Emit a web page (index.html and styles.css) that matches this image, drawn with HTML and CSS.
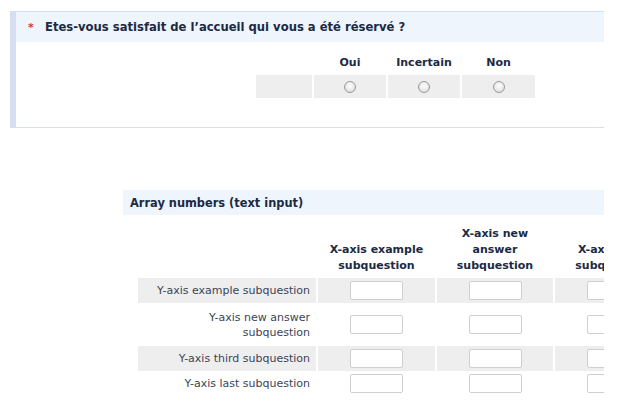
FILE: index.html
```html
<!DOCTYPE html>
<html lang="fr">
<head>
<meta charset="utf-8">
<link rel="stylesheet" href="styles.css">
</head>
<body>
<div class="page">
  <section class="q1">
    <div class="q1-head"><span class="req">*</span><span class="q1-title">Etes-vous satisfait de l’accueil qui vous a été réservé ?</span></div>
    <div class="q1-grid">
      <div class="hcell"></div>
      <div class="hcell">Oui</div>
      <div class="hcell">Incertain</div>
      <div class="hcell">Non</div>
      <div class="rcell"></div>
      <div class="rcell"><span class="radio"></span></div>
      <div class="rcell"><span class="radio"></span></div>
      <div class="rcell"><span class="radio"></span></div>
    </div>
  </section>

  <section class="q2">
    <div class="q2-head">Array numbers (text input)</div>
    <div class="q2-grid">
      <div class="colhead"></div>
      <div class="colhead">X-axis example<br>subquestion</div>
      <div class="colhead">X-axis new<br>answer<br>subquestion</div>
      <div class="colhead">X-axis third<br>subquestion</div>

      <div class="lbl shade">Y-axis example subquestion</div>
      <div class="cell shade"><span class="inp"></span></div>
      <div class="cell shade"><span class="inp"></span></div>
      <div class="cell shade"><span class="inp"></span></div>

      <div class="lbl tall">Y-axis new answer<br>subquestion</div>
      <div class="cell"><span class="inp"></span></div>
      <div class="cell"><span class="inp"></span></div>
      <div class="cell"><span class="inp"></span></div>

      <div class="lbl shade">Y-axis third subquestion</div>
      <div class="cell shade"><span class="inp"></span></div>
      <div class="cell shade"><span class="inp"></span></div>
      <div class="cell shade"><span class="inp"></span></div>

      <div class="lbl">Y-axis last subquestion</div>
      <div class="cell"><span class="inp"></span></div>
      <div class="cell"><span class="inp"></span></div>
      <div class="cell"><span class="inp"></span></div>
    </div>
  </section>
</div>
</body>
</html>
```

FILE: styles.css
```css
html, body {
  margin: 0;
  padding: 0;
  background: #ffffff;
}

body {
  font-family: "DejaVu Sans", Verdana, sans-serif;
  font-size: 11px;
  color: #1c2a44;
}

.page {
  width: 604px;
  height: 419px;
  overflow: hidden;
  padding-top: 11px;
  box-sizing: border-box;
}

/* ---------- question 1 ---------- */
.q1 {
  margin-left: 10px;
  height: 117px;
  box-sizing: border-box;
  border-left: 6px solid #d3e0f1;
  border-top: 1px solid #d3e0f1;
  border-bottom: 1px solid #d3e0f1;
}

.q1-head {
  height: 30px;
  background: #eef5fd;
  display: flex;
  align-items: center;
  padding-left: 12px;
  font-weight: bold;
  font-size: 11.6px;
}

.req {
  color: #e0323c;
  font-size: 11px;
  width: 17px;
}

.q1-grid {
  display: grid;
  grid-template-columns: 56px 72px 72px 73px;
  column-gap: 2px;
  margin-left: 240px;
}

.hcell {
  height: 33px;
  display: flex;
  align-items: center;
  justify-content: center;
  font-weight: bold;
  padding-top: 8px;
  box-sizing: border-box;
}

.rcell {
  height: 23px;
  background: #eeeeee;
  display: flex;
  align-items: center;
  justify-content: center;
}

.radio {
  width: 10px;
  height: 10px;
  border-radius: 50%;
  border: 1px solid #9a9a9a;
  background: radial-gradient(circle at 50% 40%, #ffffff 0%, #e6e6e6 60%, #cfcfcf 100%);
}

/* ---------- question 2 ---------- */
.q2 {
  margin-top: 62px;
  margin-left: 123px;
}

.q2-head {
  height: 25px;
  background: #eef5fd;
  display: flex;
  align-items: center;
  padding-left: 7px;
  font-weight: bold;
  font-size: 11.4px;
}

.q2-grid {
  display: grid;
  grid-template-columns: 178px 117px 116px 117px;
  column-gap: 2px;
  margin-left: 15px;
  margin-top: 11px;
}

.colhead {
  height: 52px;
  display: flex;
  align-items: flex-end;
  justify-content: center;
  text-align: center;
  font-weight: bold;
  line-height: 16px;
  padding: 0 0 4px;
  box-sizing: border-box;
  white-space: nowrap;
}

.lbl {
  height: 25px;
  display: flex;
  align-items: center;
  justify-content: flex-end;
  text-align: right;
  padding: 0 6px 0 0;
  color: #3a4458;
  line-height: 15px;
  white-space: nowrap;
}

.lbl.tall {
  height: 43px;
}

.shade {
  background: #eeeeee;
}

.cell {
  display: flex;
  align-items: center;
  justify-content: center;
}

.inp {
  width: 51px;
  height: 17px;
  background: #ffffff;
  border: 1px solid #cfcfcf;
  border-radius: 2px;
}
```
